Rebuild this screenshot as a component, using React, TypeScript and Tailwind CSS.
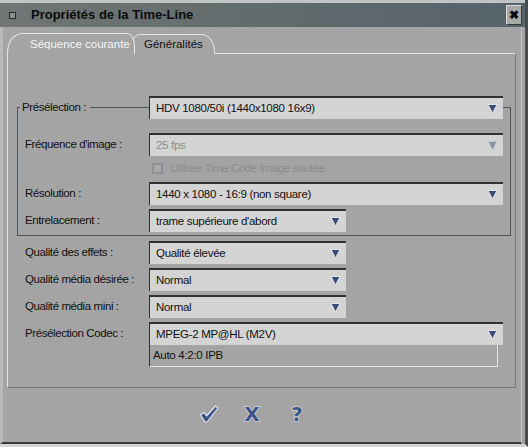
import React from "react";

const UI = "font-['Liberation_Sans',Arial,sans-serif]";

function Arrow({ disabled }: { disabled?: boolean }) {
  return (
    <svg width="11" height="11" viewBox="0 0 11 11" className="shrink-0">
      <polygon
        points="1,1.5 10,1.5 5.5,10"
        fill={disabled ? "#8a93a3" : "#3b497a"}
        stroke={disabled ? "#c4c7cc" : "#e4e6ec"}
        strokeWidth="1"
        strokeLinejoin="round"
      />
    </svg>
  );
}

function Select({
  value,
  width,
  disabled,
}: {
  value: string;
  width: string;
  disabled?: boolean;
}) {
  return (
    <div
      className={`${width} h-[23px] flex items-center justify-between pl-[6px] pr-[5px] bg-[#d4d4d4] border-t-2 border-l border-[#2b3336] relative z-10`}
    >
      <span
        className={`text-[11.5px] tracking-[-0.3px] leading-none whitespace-nowrap ${
          disabled ? "text-[#8c8c8c]" : "text-[#111]"
        }`}
      >
        {value}
      </span>
      <Arrow disabled={disabled} />
    </div>
  );
}

function Row({
  label,
  value,
  width = "w-[354px]",
  labelWidth = "w-[141px]",
  pad = "pl-[17px]",
  disabled,
  className = "",
}: {
  label: string;
  value: string;
  width?: string;
  labelWidth?: string;
  pad?: string;
  disabled?: boolean;
  className?: string;
}) {
  return (
    <div className={`flex items-center ${className}`}>
      <div
        className={`${labelWidth} ${pad} shrink-0 whitespace-nowrap text-[11.5px] tracking-[-0.4px] text-[#111]`}
      >
        {label}
      </div>
      <Select value={value} width={width} disabled={disabled} />
    </div>
  );
}

function Glyph({ ch, className = "" }: { ch: string; className?: string }) {
  return (
    <svg width="22" height="26" viewBox="0 0 22 26" className={className}>
      <text
        x="11"
        y="20"
        textAnchor="middle"
        fontFamily="DejaVu Sans, sans-serif"
        fontWeight="bold"
        fontSize="20"
        fill="#3e5387"
        stroke="#e2e6ee"
        strokeWidth="1.2"
        paintOrder="stroke"
      >
        {ch}
      </text>
    </svg>
  );
}

export default function App() {
  return (
    <div
      className={`w-[528px] h-[447px] flex flex-col bg-[#a4a4a4] border-r-[3px] border-r-[#474b4c] border-b-[3px] border-b-[#d6d6d6] overflow-hidden ${UI}`}
    >
      <div className="h-[3px] bg-[#c2c4c4] shrink-0" />
      {/* barre de titre */}
      <div className="h-[24px] shrink-0 flex items-center bg-gradient-to-r from-[#707676] via-[#626b6d] to-[#56636a]">
        <div className="ml-[9px] w-[7px] h-[7px] border border-[#262a2b] bg-[#8e9090]" />
        <span className="ml-[15px] text-[13px] font-bold text-[#0c0c0c]">Propriétés de la Time-Line</span>
        <div className="ml-auto mr-[3px] w-[16px] h-[20px] flex items-center justify-center bg-[#a9a9a9] border border-t-[#dcdcdc] border-l-[#dcdcdc] border-r-[#3a3a3a] border-b-[#3a3a3a]">
          <span className="text-[12px] font-bold leading-none text-black">✖</span>
        </div>
      </div>

      <div className="flex-1 flex flex-col border-l-[3px] border-l-[#b9b9b9] mr-[3px] border-r border-r-[#c2c2c2] border-b-2 border-b-[#3c3c3c]">
        {/* onglets */}
        <div className="mt-[6px] h-[21px] -mb-px flex items-end ml-[4px]">
          <div className="relative z-20 w-[128px] h-[21px] flex items-center whitespace-nowrap pl-[22px] pt-[2px] bg-[#a4a4a4] border-t border-l border-r border-[#e8e8e8] rounded-tl-[15px_20px] rounded-tr-[8px_13px] text-[11.5px] text-[#f4f4f4]">
            Séquence courante
          </div>
          <div className="relative z-10 -ml-[4px] w-[84px] h-[20px] flex items-center whitespace-nowrap pl-[12px] pt-[1px] bg-[#a4a4a4] border-t border-l border-r border-[#e0e0e0] rounded-tl-[9px_13px] rounded-tr-[13px_19px] text-[11.5px] text-[#121212]">
            Généralités
          </div>
        </div>

        {/* panneau */}
        <div className="ml-[4px] w-[509px] h-[335px] shrink-0 border-t border-l border-t-[#e2e2e2] border-l-[#e2e2e2] border-r border-b border-r-[#7c7c7c] border-b-[#747474] flex flex-col">
          <div className="mt-[53px] ml-[9px] w-[494px] border border-[#4d575b] pb-[3px] flex flex-col">
            <div className="-mt-[12px] flex items-center">
              <div className="w-[131px] shrink-0 pl-[2px] flex items-center">
                <span className="bg-[#a4a4a4] pl-[2px] pr-[4px] whitespace-nowrap text-[11.5px] tracking-[-0.4px] text-[#111]">
                  Présélection :
                </span>
                <div className="flex-1 h-px bg-[#4d575b]" />
              </div>
              <Select value="HDV 1080/50i (1440x1080 16x9)" width="w-[354px]" />
            </div>
            <Row
              className="mt-[14px]"
              labelWidth="w-[131px]"
              pad="pl-[7px]"
              label="Fréquence d'image :"
              value="25 fps"
              disabled
            />
            <div className="mt-[2px] h-[21px] flex items-center pl-[134px]">
              <div className="w-[11px] h-[11px] border-2 border-[#8d9196] bg-[#a8a8a8]" />
              <span className="ml-[7px] whitespace-nowrap text-[11.5px] tracking-[-0.4px] text-[#8a8a8a]">
                Utiliser Time Code Image sautée
              </span>
            </div>
            <Row
              className="mt-[3px]"
              labelWidth="w-[131px]"
              pad="pl-[7px]"
              label="Résolution :"
              value="1440 x 1080 - 16:9 (non square)"
            />
            <Row
              className="mt-[4px]"
              labelWidth="w-[131px]"
              pad="pl-[7px]"
              label="Entrelacement :"
              value="trame supérieure d'abord"
              width="w-[197px]"
            />
          </div>

          <Row className="mt-[5px]" label="Qualité des effets :" value="Qualité élevée" width="w-[197px]" />
          <Row className="mt-[4px]" label="Qualité média désirée :" value="Normal" width="w-[197px]" />
          <Row className="mt-[4px]" label="Qualité média mini :" value="Normal" width="w-[197px]" />
          <Row className="mt-[4px]" label="Présélection Codec :" value="MPEG-2 MP@HL (M2V)" />
          <div className="ml-[141px] w-[349px] h-[22px] flex items-center pl-[3px] border-l border-l-[#2b3336] border-r border-b border-r-[#e2e2e2] border-b-[#e2e2e2] whitespace-nowrap text-[11.5px] tracking-[-0.3px] text-[#111]">
            Auto 4:2:0 IPB
          </div>
        </div>

        {/* boutons */}
        <div className="flex-1 flex items-center pl-[196px] pb-[2px]">
          <svg width="20" height="20" viewBox="0 0 20 20">
            <path
              d="M1.5 11 L5 8.5 L7.5 12 L16.5 2 L19 4 L8 18 L6 18 Z"
              fill="#3e5387"
              stroke="#e2e6ee"
              strokeWidth="1.2"
              strokeLinejoin="round"
            />
          </svg>
          <Glyph ch="X" className="ml-[22px]" />
          <Glyph ch="?" className="ml-[23px]" />
        </div>
      </div>
    </div>
  );
}
